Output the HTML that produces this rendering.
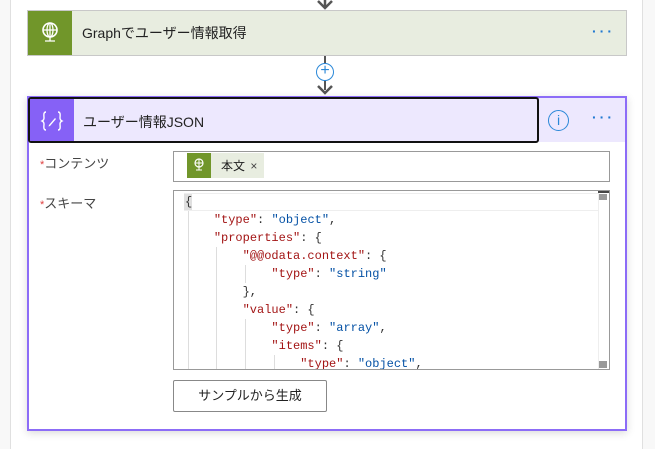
<!DOCTYPE html>
<html><head><meta charset="utf-8"><style>
*{margin:0;padding:0;box-sizing:border-box}
body{width:655px;height:449px;position:relative;overflow:hidden;background:#fff;font-family:"Liberation Sans","Noto Sans CJK JP",sans-serif;color:#222}
.a{position:absolute}
.code{font-family:"Liberation Mono",monospace;font-size:12px;white-space:pre;line-height:18px}
.k{color:#a31515}.s{color:#0451a5}.p{color:#333}
.dots{font-size:14px;color:#1f78d1;letter-spacing:3px;font-weight:bold}
</style></head><body>
<div class="a" style="left:0;top:0;width:11px;height:449px;background:#f8f8f8;border-right:1px solid #e0e0e0"></div>
<div class="a" style="left:642px;top:0;width:13px;height:449px;background:#f8f8f8;border-left:1px solid #e0e0e0"></div>
<svg class="a" style="left:313px;top:0" width="24" height="10"><path d="M12 0V8M5 1L12 8L19 1" stroke="#555" stroke-width="2.5" fill="none"/></svg>
<div class="a" style="left:27px;top:10px;width:600px;height:46px;background:#e8ede0;border:1px solid #c8c8c8"></div>
<div class="a" style="left:28px;top:11px;width:44px;height:44px;background:#71962a"></div>
<svg class="a" style="left:38px;top:20px" width="24" height="26" viewBox="0 0 24 26"><circle cx="12" cy="10" r="7" fill="none" stroke="#fff" stroke-width="1.6"/><ellipse cx="12" cy="10" rx="3" ry="7" fill="none" stroke="#fff" stroke-width="1.3"/><path d="M5 10H19M12 3V21M7 21H17" stroke="#fff" stroke-width="1.3"/></svg>
<div class="a" style="left:82px;top:23px;font-size:14px">Graphでユーザー情報取得</div>
<div class="a dots" style="left:592px;top:23px">···</div>
<div class="a" style="left:324px;top:56px;width:2px;height:34px;background:#555"></div>
<div class="a" style="left:316px;top:63px;width:18px;height:18px;border-radius:50%;background:#fff;border:1.5px solid #2b88d8;color:#2b88d8;font-size:16px;line-height:14px;text-align:center">+</div>
<svg class="a" style="left:313px;top:84px" width="24" height="12"><path d="M5 2L12 9L19 2" stroke="#555" stroke-width="2.5" fill="none"/></svg>
<div class="a" style="left:27px;top:96px;width:600px;height:335px;border:2px solid #8c6cf7;background:#fff;box-shadow:0 2px 8px rgba(0,0,0,.15)"></div>
<div class="a" style="left:29px;top:98px;width:596px;height:44px;background:#ede8fe"></div>
<div class="a" style="left:28px;top:97px;width:511px;height:46px;border:2px solid #111;border-radius:3px;overflow:hidden;background:#ede8fe">
<div class="a" style="left:0;top:0;width:44px;height:44px;background:#8661f6"></div>
<svg class="a" style="left:10px;top:10px" width="24" height="24" viewBox="0 0 24 24"><path d="M6 3C3 3 4 7 4 9C4 11 2 12 2 12C2 12 4 13 4 15C4 17 3 21 6 21M18 3C21 3 20 7 20 9C20 11 22 12 22 12C22 12 20 13 20 15C20 17 21 21 18 21" stroke="#fff" stroke-width="1.4" fill="none"/><path d="M9 16L15 9L16 10L10 17L8.5 17.5Z" fill="#fff"/></svg>
<div class="a" style="left:53px;top:13px;font-size:14px">ユーザー情報JSON</div>
</div>
<div class="a" style="left:548px;top:110px;width:21px;height:21px;border-radius:50%;border:1.5px solid #2b88d8;color:#2b88d8;font-size:14px;text-align:center;line-height:18px">i</div>
<div class="a dots" style="left:592px;top:109px">···</div>
<div class="a" style="left:40px;top:153px;font-size:13px;color:#444"><span style="color:#e04040;font-size:11px">*</span>コンテンツ</div>
<div class="a" style="left:173px;top:151px;width:437px;height:31px;border:1px solid #999"></div>
<div class="a" style="left:187px;top:153px;width:77px;height:25px;background:#e8ede0"></div>
<div class="a" style="left:187px;top:153px;width:24px;height:25px;background:#71962a"></div>
<svg class="a" style="left:192px;top:157px" width="14" height="17"><circle cx="7" cy="6" r="4" fill="none" stroke="#fff" stroke-width="1.2"/><path d="M3 6H11M7 2V13M4 13H10" stroke="#fff" stroke-width="1"/></svg>
<div class="a" style="left:221px;top:157px;font-size:12px">本文 <span style="color:#444;margin-left:2px">×</span></div>
<div class="a" style="left:40px;top:193px;font-size:13px;color:#444"><span style="color:#e04040;font-size:11px">*</span>スキーマ</div>
<div class="a" style="left:173px;top:190px;width:437px;height:180px;border:1px solid #999;overflow:hidden;background:#fff">
<div class="a" style="left:10px;top:2px;width:416px;height:18px;border:1px solid #eee"></div>
<div class="a" style="left:10px;top:3px;width:8px;height:16px;background:#e0e0e0"></div>
<div class="a" style="left:424px;top:0;width:12px;height:178px;background:#fff;border-left:1px solid #eee"></div>
<div class="a" style="left:424px;top:0;width:12px;height:2px;background:#444"></div>
<div class="a" style="left:425px;top:3px;width:8px;height:6px;background:#999"></div>
<div class="a" style="left:425px;top:170px;width:8px;height:7px;background:#999"></div>
<div class="a" style="left:14px;top:20px;width:1px;height:160px;background:#ddd"></div>
<div class="a" style="left:42px;top:56px;width:1px;height:124px;background:#ddd"></div>
<div class="a" style="left:71px;top:74px;width:1px;height:18px;background:#ddd"></div>
<div class="a" style="left:71px;top:128px;width:1px;height:52px;background:#ddd"></div>
<div class="a" style="left:100px;top:164px;width:1px;height:16px;background:#ddd"></div>
<div class="a code" style="left:11px;top:2px"><span class="p">{</span>
    <span class="k">"type"</span><span class="p">: </span><span class="s">"object"</span><span class="p">,</span>
    <span class="k">"properties"</span><span class="p">: {</span>
        <span class="k">"@@odata.context"</span><span class="p">: {</span>
            <span class="k">"type"</span><span class="p">: </span><span class="s">"string"</span>
        <span class="p">},</span>
        <span class="k">"value"</span><span class="p">: {</span>
            <span class="k">"type"</span><span class="p">: </span><span class="s">"array"</span><span class="p">,</span>
            <span class="k">"items"</span><span class="p">: {</span>
                <span class="k">"type"</span><span class="p">: </span><span class="s">"object"</span><span class="p">,</span></div>
</div>
<div class="a" style="left:173px;top:380px;width:154px;height:32px;border:1px solid #888;border-radius:2px;background:#fff;font-size:13px;text-align:center;line-height:30px">サンプルから生成</div>
</body></html>
